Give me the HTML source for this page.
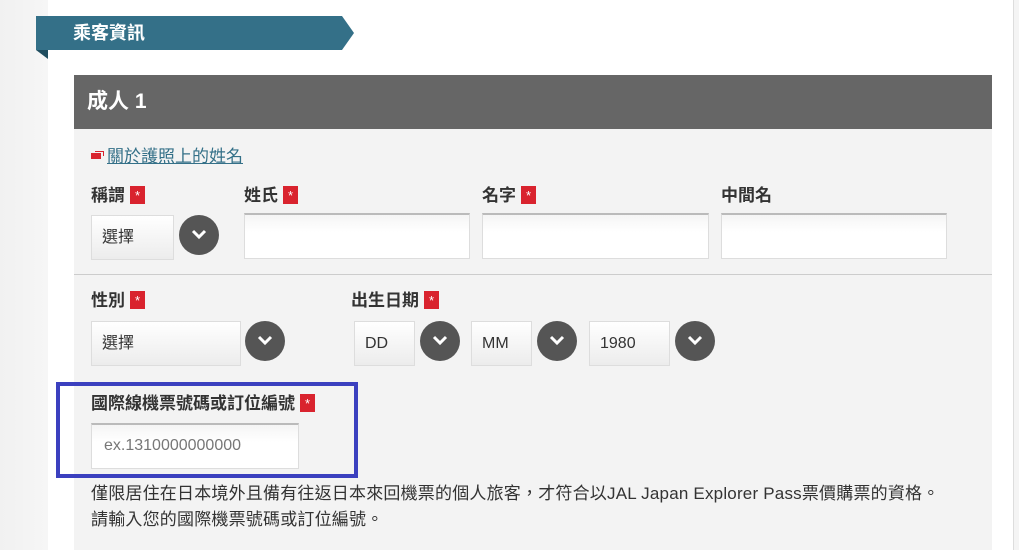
<!DOCTYPE html>
<html><head><meta charset="utf-8">
<style>
*{margin:0;padding:0;box-sizing:border-box}
body{width:1019px;height:550px;overflow:hidden;background:#fff;position:relative;font-family:"Liberation Sans","Noto Sans CJK TC",sans-serif;color:#333}
.a{position:absolute}
.lbl{position:absolute;font-size:17px;font-weight:bold;color:#333;white-space:nowrap;line-height:22px}
.star{display:inline-block;width:15px;height:18px;background:#d9232e;color:#fff;font-size:13px;text-align:center;line-height:20px;vertical-align:1px;margin-left:5px;font-weight:normal}
.sel{position:absolute;background:linear-gradient(#fff,#ececec);border:1px solid #ddd;font-size:16px;color:#333;padding-left:10px;line-height:43px;height:45px}
.btn{position:absolute;width:40px;height:40px;border-radius:50%;background:#555}
.btn svg{position:absolute;left:12px;top:14px}
.inp{position:absolute;background:linear-gradient(#f5f5f5,#fff 40%);border:1px solid #ddd;border-top:2px solid #bbb;height:46px}
</style></head><body>
<div class="a" style="left:0;top:0;width:48px;height:550px;background:linear-gradient(90deg,#f1f1f1,#f6f6f6)"></div>
<div class="a" style="left:1013px;top:0;width:6px;height:550px;background:#f4f4f4;border-left:1px solid #ddd"></div>
<svg class="a" style="left:36px;top:16px" width="320" height="44"><polygon points="0,0 306,0 318,17 306,34 0,34" fill="#347088"/><polygon points="0,34 12,34 12,43" fill="#1f4d5f"/></svg>
<div class="a" style="left:73px;top:21px;font-size:18px;font-weight:bold;color:#fff;line-height:24px">乘客資訊</div>
<div class="a" style="left:74px;top:75px;width:918px;height:54px;background:#666"></div>
<div class="a" style="left:87px;top:89px;font-size:21px;font-weight:bold;color:#fff;line-height:26px">成人 1</div>
<div class="a" style="left:74px;top:129px;width:918px;height:421px;background:#f3f3f3"></div>
<div class="a" style="left:74px;top:274px;width:918px;height:1px;background:#ccc"></div>
<div class="a" style="left:91px;top:153px;width:10px;height:6px;background:#d9232e"></div>
<div class="a" style="left:95px;top:151px;width:9px;height:5px;border:1px solid #d9232e;border-left:none;border-bottom:none"></div>
<div class="a" style="left:107px;top:146px;font-size:17px;color:#347088;text-decoration:underline;line-height:22px">關於護照上的姓名</div>

<div class="lbl" style="left:91px;top:185px">稱謂<span class="star">*</span></div>
<div class="lbl" style="left:244px;top:185px">姓氏<span class="star">*</span></div>
<div class="lbl" style="left:482px;top:185px">名字<span class="star">*</span></div>
<div class="lbl" style="left:721px;top:185px">中間名</div>
<div class="sel" style="left:91px;top:215px;width:83px">選擇</div>
<div class="btn" style="left:179px;top:215px"><svg width="16" height="12"><path d="M2,2 L8,8 L14,2" stroke="#fff" stroke-width="3" fill="none"/></svg></div>
<div class="inp" style="left:244px;top:213px;width:226px"></div>
<div class="inp" style="left:482px;top:213px;width:227px"></div>
<div class="inp" style="left:721px;top:213px;width:226px"></div>

<div class="lbl" style="left:91px;top:290px">性別<span class="star">*</span></div>
<div class="lbl" style="left:351px;top:290px">出生日期<span class="star">*</span></div>
<div class="sel" style="left:91px;top:321px;width:150px">選擇</div>
<div class="btn" style="left:245px;top:321px;width:40px"><svg width="16" height="12"><path d="M2,2 L8,8 L14,2" stroke="#fff" stroke-width="3" fill="none"/></svg></div>
<div class="sel" style="left:354px;top:321px;width:61px">DD</div>
<div class="btn" style="left:420px;top:321px"><svg width="16" height="12"><path d="M2,2 L8,8 L14,2" stroke="#fff" stroke-width="3" fill="none"/></svg></div>
<div class="sel" style="left:471px;top:321px;width:61px">MM</div>
<div class="btn" style="left:537px;top:321px"><svg width="16" height="12"><path d="M2,2 L8,8 L14,2" stroke="#fff" stroke-width="3" fill="none"/></svg></div>
<div class="sel" style="left:589px;top:321px;width:81px">1980</div>
<div class="btn" style="left:675px;top:321px"><svg width="16" height="12"><path d="M2,2 L8,8 L14,2" stroke="#fff" stroke-width="3" fill="none"/></svg></div>

<div class="a" style="left:56px;top:382px;width:302px;height:96px;border:4px solid #3b40bf"></div>
<div class="lbl" style="left:91px;top:393px">國際線機票號碼或訂位編號<span class="star">*</span></div>
<div class="inp" style="left:91px;top:423px;width:208px;height:46px;font-size:16px;color:#777;padding-left:12px;line-height:42px">ex.1310000000000</div>
<div class="a" style="left:91px;top:481px;font-size:17px;letter-spacing:0.2px;color:#333;line-height:26px;white-space:nowrap">僅限居住在日本境外且備有往返日本來回機票的個人旅客，才符合以JAL Japan Explorer Pass票價購票的資格。<br>請輸入您的國際機票號碼或訂位編號。</div>
</body></html>
